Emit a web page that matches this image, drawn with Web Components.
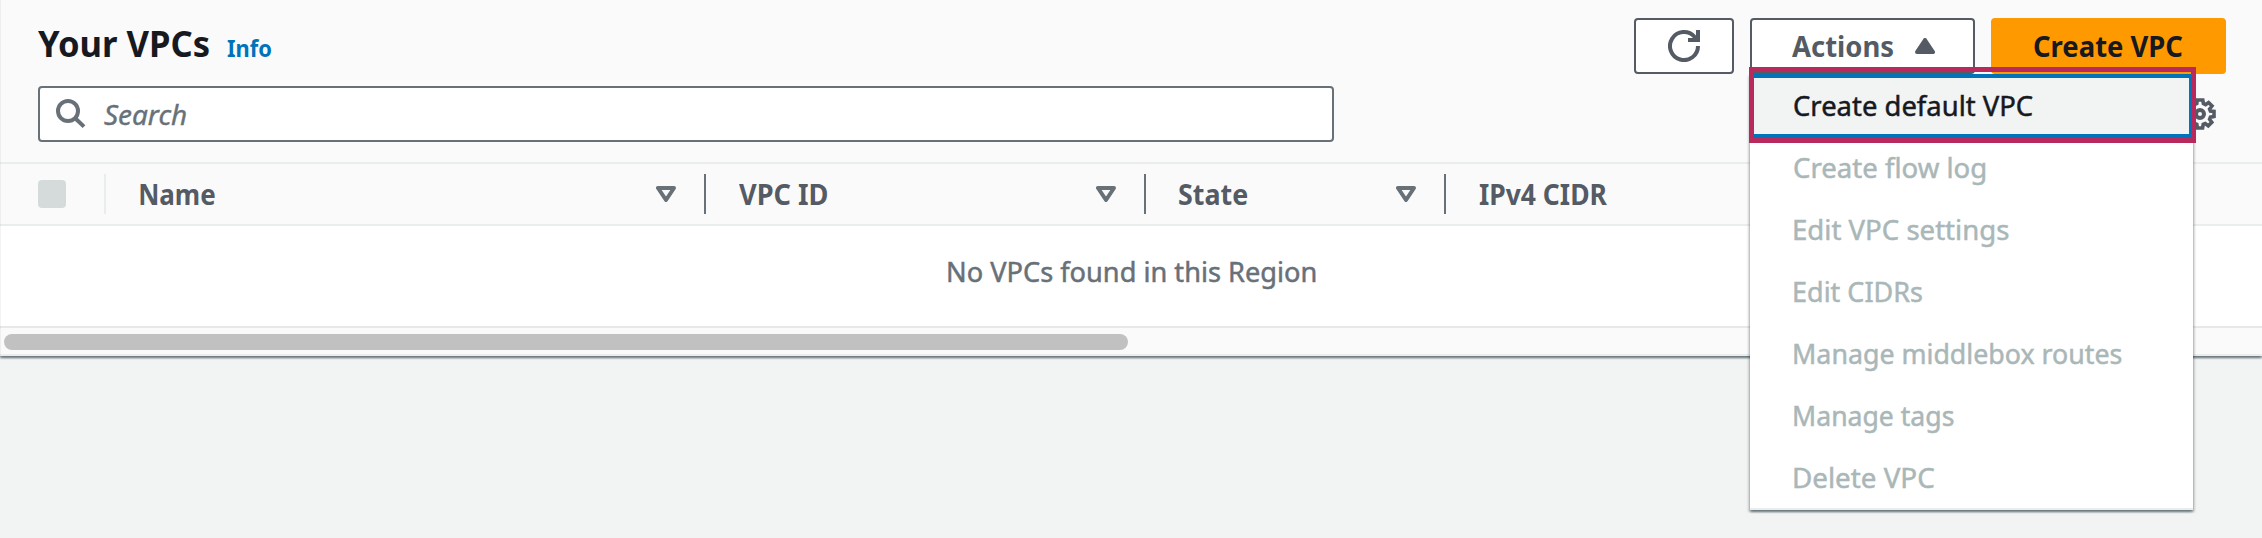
<!DOCTYPE html>
<html lang="en">
<head>
<meta charset="utf-8">
<title>Your VPCs</title>
<style>
html,body{margin:0;padding:0}
body{width:2262px;height:538px;overflow:hidden;background:#f2f3f3;font-family:"Noto Sans","Open Sans",sans-serif;font-size:28px;color:#16191f}
</style>
</head>
<body>
<vpc-page></vpc-page>
<script>
const define=(name,html,setup)=>customElements.define(name,class extends HTMLElement{
  connectedCallback(){
    if(this.shadowRoot)return;
    const t=document.createElement('template');
    t.innerHTML=html;
    this.attachShadow({mode:'open'}).appendChild(t.content.cloneNode(true));
    if(setup)setup(this,this.shadowRoot);
  }
});

/* A one-line label whose glyphs are condensed to the given width. */
define('fit-text',`<style>
:host{display:block;flex:none;white-space:nowrap;line-height:40px;height:40px}
span{display:inline-block;transform-origin:0 50%}
</style><span><slot></slot></span>`,(el,root)=>{
  const cs=getComputedStyle(el),ctx=document.createElement('canvas').getContext('2d');
  ctx.font=`${cs.fontStyle} ${cs.fontWeight} ${cs.fontSize} ${cs.fontFamily}`;
  const m=ctx.measureText(el.textContent),w=+el.getAttribute('w');
  const s=w/(m.actualBoundingBoxLeft+m.actualBoundingBoxRight);
  el.style.width=w+'px';
  root.querySelector('span').style.transform=`translateX(${m.actualBoundingBoxLeft*s}px) scaleX(${s})`;
});

define('ui-button',`<style>
:host{display:flex;align-items:center;justify-content:center;box-sizing:border-box;height:56px;flex:none;
background:#fff;border:2px solid #545b64;border-radius:4px;color:#545b64;font-weight:700}
:host([primary]){background:#ff9900;border-color:#ff9900;color:#16191f}
</style><slot></slot>`);

define('icon-refresh',`<style>:host{display:block;width:32px;height:32px}svg{display:block}</style>
<svg width="32" height="32" viewBox="0 0 32 32" fill="none" stroke="#545b64" stroke-width="4">
<path d="M30 16A14 14 0 1 1 26.5 6.8L29 10"/><path d="M30 0V10H20"/></svg>`);

define('icon-search',`<style>:host{display:block;width:32px;height:32px;flex:none}svg{display:block}</style>
<svg width="32" height="32" viewBox="0 0 32 32" fill="none" stroke="#687078" stroke-width="4">
<circle cx="13" cy="13" r="10"/><path d="M20.2 20.2L29 28.6"/></svg>`);

define('icon-caret-up',`<style>:host{display:block}svg{display:block}</style>
<svg width="20" height="16" viewBox="0 0 20 16"><path d="M10 2L18 14H2Z" fill="#545b64" stroke="#545b64" stroke-width="4" stroke-linejoin="round"/></svg>`);

define('icon-sort',`<style>:host{display:block;flex:none}svg{display:block}</style>
<svg width="20" height="16" viewBox="0 0 20 16"><path d="M2 2H18L10 14Z" fill="none" stroke="#687078" stroke-width="4" stroke-linejoin="round"/></svg>`);

define('icon-gear',`<style>:host{display:block}svg{display:block}</style>
<svg width="32" height="32" viewBox="0 0 32 32" fill="none" stroke="#545b64">
<circle cx="16" cy="16" r="4" stroke-width="4"/>
<path stroke-width="3.6" stroke-linejoin="miter" d="M13.2 2H18.8L19.4 5.6L21.6 6.6L24.6 4.6L28 8L25.6 11L26.4 13L30 13.4V18.6L26.4 19.2L25.6 21.2L27.8 24.2L24.2 27.8L21.2 25.6L19.2 26.4L18.6 30H13.4L12.8 26.4L10.8 25.6L7.8 27.8L4.2 24.2L6.4 21.2L5.6 19.2L2 18.6V13.4L5.6 12.8L6.4 10.8L4.2 7.8L7.8 4.2L10.8 6.4L12.8 5.6Z"/></svg>`);

define('search-box',`<style>
:host{display:flex;align-items:center;box-sizing:border-box;width:1296px;height:56px;padding-left:15px;gap:17px;
background:#fff;border:2px solid #687078;border-radius:4px;color:#687078;font-style:italic;-webkit-text-stroke:.4px}
</style><icon-search></icon-search><slot></slot>`);

define('menu-item',`<style>
:host{display:flex;align-items:center;box-sizing:border-box;height:62px;padding:0 0 4px 43.6px;color:#aab7b8;-webkit-text-stroke:.5px}
:host([active]){height:64px;margin-left:4px;margin-right:2px;padding:0 0 2px 39.5px;background:#f2f3f3;color:#16191f;border:solid #0073bb;border-width:4px 2px 4px 0}
</style><slot></slot>`);

define('actions-menu',`<style>
:host{display:block;position:absolute;z-index:2;left:0;top:56px;width:443px;height:436px;box-sizing:border-box;background:#fff;border-bottom:2px solid #eaeded;
font-weight:400;box-shadow:0 2px 2px 0 rgba(0,28,36,.4),2px 2px 2px 0 rgba(0,28,36,.15),-2px 2px 2px 0 rgba(0,28,36,.15);}
.mark{position:absolute;left:-1px;top:-7px;width:447px;height:76px;box-sizing:border-box;border:5px solid #b72a5b}
</style>
<menu-item active><fit-text w="238.5">Create default VPC</fit-text></menu-item>
<menu-item><fit-text w="191">Create flow log</fit-text></menu-item>
<menu-item><fit-text w="215">Edit VPC settings</fit-text></menu-item>
<menu-item><fit-text w="128.5">Edit CIDRs</fit-text></menu-item>
<menu-item><fit-text w="328">Manage middlebox routes</fit-text></menu-item>
<menu-item><fit-text w="160">Manage tags</fit-text></menu-item>
<menu-item><fit-text w="140">Delete VPC</fit-text></menu-item>
<div class="mark"></div>`);

define('panel-header',`<style>
:host{display:block;box-sizing:border-box;height:162px;padding:18px 36px 0 38px}
.row{display:flex;justify-content:space-between;height:56px}
.title{display:flex;align-items:flex-start;gap:17px;padding-top:6px}
.h{font-size:35px;font-weight:700}
.info{font-size:24px;font-weight:700;color:#0073bb;margin-top:4px}
.actions{display:flex;gap:16px}
.anchor{position:relative;display:block}
.r{width:100px}.a{width:225px;gap:22px}.a fit-text{margin-left:1px}.c{width:235px}
.filters{display:flex;align-items:center;justify-content:space-between;margin-top:12px;padding-right:10px}
</style>
<div class="row">
<div class="title"><fit-text class="h" w="171.5">Your VPCs</fit-text><fit-text class="info" w="44">Info</fit-text></div>
<div class="actions">
<ui-button class="r"><icon-refresh></icon-refresh></ui-button>
<div class="anchor"><ui-button class="a"><fit-text w="101">Actions</fit-text><icon-caret-up></icon-caret-up></ui-button><actions-menu></actions-menu></div>
<ui-button class="c" primary><fit-text w="149">Create VPC</fit-text></ui-button>
</div></div>
<div class="filters"><search-box><fit-text w="82">Search</fit-text></search-box><icon-gear></icon-gear></div>`);

define('table-column',`<style>
:host{display:flex;align-items:center;justify-content:space-between;box-sizing:border-box;height:40px;padding:0 28px 0 32.5px;border-right:2px solid #687078}
:host([last]){border:0}
:host([last]) icon-sort{display:none}
</style><slot></slot><icon-sort></icon-sort>`);

define('table-head',`<style>
:host{display:grid;grid-template-columns:106px 600px 440px 300px 1fr;align-items:center;box-sizing:border-box;height:64px;border:solid #eaeded;border-width:2px 0;color:#545b64;font-weight:700}
.sel{box-sizing:border-box;height:40px;display:flex;align-items:center;padding-left:38px;border-right:2px solid #eaeded}
.box{width:28px;height:28px;border-radius:4px;background:#d5dbdb}
.name{padding-left:34px}
.state{padding-left:33px}
</style>
<div class="sel"><div class="box"></div></div>
<table-column class="name"><fit-text w="75">Name</fit-text></table-column>
<table-column><fit-text w="88">VPC ID</fit-text></table-column>
<table-column class="state"><fit-text w="68.5">State</fit-text></table-column>
<table-column last><fit-text w="128.5">IPv4 CIDR</fit-text></table-column>`);

define('vpc-page',`<style>
:host{display:block;width:2262px;height:538px;overflow:hidden}
.panel{position:relative;height:356px;box-sizing:border-box;background:#fafafa;border-bottom:2px solid #eaeded;
box-shadow:0 2px 2px 0 rgba(0,28,36,.4),2px 2px 2px 0 rgba(0,28,36,.15),-2px 2px 2px 0 rgba(0,28,36,.15);}
.panel::before{content:"";position:absolute;left:0;top:0;width:1px;height:356px;background:rgba(0,28,36,.05)}
.empty{display:flex;align-items:center;height:100px;box-sizing:border-box;padding:0 0 10px 948px;background:#fff;color:#687078;-webkit-text-stroke:.5px}
.scroll{box-sizing:border-box;height:28px;border-top:2px solid #e8e8e8;padding:6px 0 0 4px}
.thumb{width:1124px;height:16px;border-radius:8px;background:#c1c1c1}
</style>
<div class="panel"><panel-header></panel-header><table-head></table-head>
<div class="empty"><fit-text w="368">No VPCs found in this Region</fit-text></div>
<div class="scroll"><div class="thumb"></div></div></div>`);
</script>
</body>
</html>
